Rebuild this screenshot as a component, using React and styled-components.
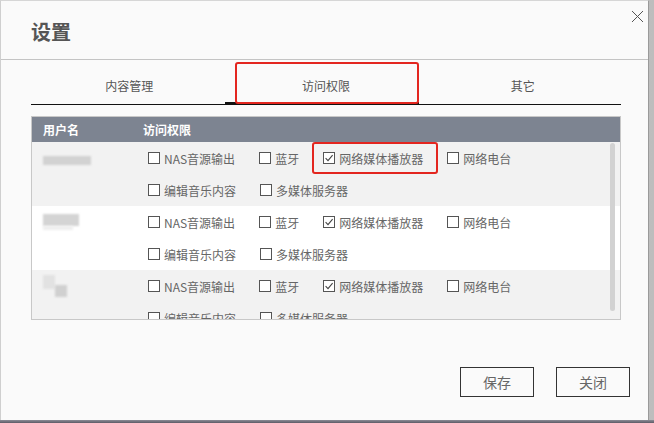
import React from "react";
import styled, { createGlobalStyle } from "styled-components";

const GlobalStyle = createGlobalStyle`
  html, body { margin: 0; padding: 0; }
  body {
    width: 654px;
    height: 423px;
    overflow: hidden;
    background: #6f6f78;
    font-family: "Noto Sans CJK SC", "Liberation Sans", sans-serif;
  }
`;

const Frame = styled.div`
  width: 654px;
  height: 423px;
  background: linear-gradient(to right, #d8d8d8 0, #bdbdbd 100%);
  display: flex;
  flex-direction: column;
`;

const Dialog = styled.div`
  position: relative;
  box-sizing: border-box;
  width: 649px;
  height: 420px;
  background: #fafafa;
  border-left: 1px solid #cfcfcf;
  border-top: 1px solid #d6d6d6;
  border-right: 1px solid #9a9a9a;
  display: flex;
  flex-direction: column;
`;

const BottomEdge = styled.div`
  height: 3px;
  background: linear-gradient(#8c8c96, #5d5a66);
`;

const Header = styled.div`
  height: 58px;
  display: flex;
  justify-content: space-between;
  align-items: flex-start;
  border-bottom: 1px solid #c4c4c4;
`;

const Title = styled.h1`
  margin: 19px 0 0 30px;
  font-size: 20px;
  line-height: 24px;
  font-weight: bold;
  color: #555;
`;

const Close = styled.button`
  margin: 9px 4px 0 0;
  padding: 0;
  width: 13px;
  height: 13px;
  border: none;
  background: none;
  display: flex;
`;

const Tabs = styled.div`
  margin: 0 27px 0 30px;
  display: flex;
  border-bottom: 1px solid #111;
`;

const Tab = styled.div`
  position: relative;
  flex: 1;
  height: 44px;
  line-height: 52px;
  text-align: center;
  font-size: 12px;
  color: #555;
  &::after {
    content: "";
    display: ${(p) => (p.$active ? "block" : "none")};
    position: absolute;
    left: -3px;
    right: 5px;
    bottom: -1px;
    height: 3px;
    background: #111;
  }
`;

const Marker = styled.div`
  position: absolute;
  border: 2px solid #e3261f;
  border-radius: 3px;
  pointer-events: none;
`;

const TableBox = styled.div`
  position: relative;
  margin: 11px 27px 0 30px;
  height: 202px;
  border: 1px solid #c8c8c8;
  display: flex;
  flex-direction: column;
  overflow: hidden;
`;

const HeadRow = styled.div`
  display: grid;
  grid-template-columns: 100px 1fr;
  height: 25px;
  align-items: center;
  background: #7d8491;
  color: #fff;
  font-size: 12px;
  font-weight: bold;
  padding-left: 11px;
`;

const Body = styled.div`
  flex: 1;
  overflow: hidden;
`;

const Row = styled.div`
  display: grid;
  grid-template-columns: 116px 1fr;
  height: 64px;
  background: ${(p) => (p.$alt ? "#f2f2f2" : "#ffffff")};
`;

const UserCell = styled.div`
  padding-left: 11px;
  display: flex;
  flex-direction: column;
`;

const Smudge = styled.div`
  width: ${(p) => p.$w}px;
  height: ${(p) => p.$h}px;
  margin-top: ${(p) => p.$top}px;
  margin-left: ${(p) => p.$left || 0}px;
  background: ${(p) => p.$c};
  filter: blur(1.2px);
`;

const Perms = styled.div`
  display: flex;
  flex-wrap: wrap;
  column-gap: 24px;
  width: 420px;
  align-content: flex-start;
`;

const Item = styled.label`
  height: 32px;
  display: flex;
  align-items: center;
  gap: 4px;
  font-size: 12px;
  color: #666;
  white-space: nowrap;
`;

const Scrollbar = styled.div`
  position: absolute;
  left: 578px;
  top: 26px;
  width: 5px;
  height: 168px;
  border-radius: 3px;
  background: #d2d2d2;
`;

const Footer = styled.div`
  margin-top: auto;
  margin-bottom: 23px;
  padding-right: 18px;
  display: flex;
  justify-content: flex-end;
  gap: 22px;
`;

const Button = styled.button`
  width: 74px;
  height: 30px;
  border: 1px solid #333;
  background: #fafafa;
  font-family: inherit;
  font-size: 14px;
  color: #666;
`;

const Box = ({ checked }) => (
  <svg width="12" height="12" viewBox="0 0 12 12">
    <rect x="0.5" y="0.5" width="11" height="11" fill="#fff" stroke="#555" />
    {checked && (
      <path d="M2.6 6.2 L5 8.6 L9.6 3.2" fill="none" stroke="#444" strokeWidth="1.1" />
    )}
  </svg>
);

const perms = [
  { label: "NAS音源输出" },
  { label: "蓝牙" },
  { label: "网络媒体播放器", checked: true },
  { label: "网络电台" },
  { label: "编辑音乐内容" },
  { label: "多媒体服务器" },
];

const users = [
  [{ w: 48, h: 9, top: 14, c: "#d2d2d2" }],
  [
    { w: 36, h: 12, top: 8, c: "#d4d4d4" },
    { w: 30, h: 4, top: 0, c: "#eeeeee" },
  ],
  [
    { w: 12, h: 14, top: 5, c: "#e2e2e2" },
    { w: 12, h: 12, top: -4, left: 12, c: "#d0d0d0" },
  ],
];

export default function App() {
  return (
    <>
      <GlobalStyle />
      <Frame>
        <Dialog>
          <Header>
            <Title>设置</Title>
            <Close aria-label="close">
              <svg width="13" height="13" viewBox="0 0 13 13">
                <path d="M1 1 L12 12 M12 1 L1 12" stroke="#555" strokeWidth="1" />
              </svg>
            </Close>
          </Header>
          <Tabs>
            <Tab>内容管理</Tab>
            <Tab $active>访问权限</Tab>
            <Tab>其它</Tab>
          </Tabs>
          <Marker style={{ left: 234, top: 61, width: 180, height: 38 }} />
          <TableBox>
            <HeadRow>
              <span>用户名</span>
              <span>访问权限</span>
            </HeadRow>
            <Body>
              {users.map((marks, i) => (
                <Row key={i} $alt={i % 2 === 0}>
                  <UserCell>
                    {marks.map((m, j) => (
                      <Smudge key={j} $w={m.w} $h={m.h} $top={m.top} $left={m.left} $c={m.c} />
                    ))}
                  </UserCell>
                  <Perms>
                    {perms.map((p) => (
                      <Item key={p.label}>
                        <Box checked={p.checked} />
                        {p.label}
                      </Item>
                    ))}
                  </Perms>
                </Row>
              ))}
            </Body>
            <Scrollbar />
          </TableBox>
          <Marker style={{ left: 311, top: 141, width: 122, height: 28 }} />
          <Footer>
            <Button>保存</Button>
            <Button>关闭</Button>
          </Footer>
        </Dialog>
        <BottomEdge />
      </Frame>
    </>
  );
}
